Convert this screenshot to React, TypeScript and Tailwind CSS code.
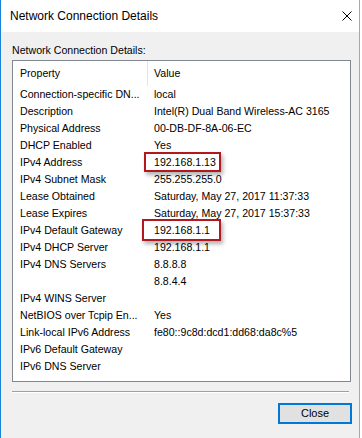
const rows: [string, string][] = [
  ['Connection-specific DN...', 'local'],
  ['Description', 'Intel(R) Dual Band Wireless-AC 3165'],
  ['Physical Address', '00-DB-DF-8A-06-EC'],
  ['DHCP Enabled', 'Yes'],
  ['IPv4 Address', '192.168.1.13'],
  ['IPv4 Subnet Mask', '255.255.255.0'],
  ['Lease Obtained', 'Saturday, May 27, 2017 11:37:33'],
  ['Lease Expires', 'Saturday, May 27, 2017 15:37:33'],
  ['IPv4 Default Gateway', '192.168.1.1'],
  ['IPv4 DHCP Server', '192.168.1.1'],
  ['IPv4 DNS Servers', '8.8.8.8'],
  ['', '8.8.4.4'],
  ['IPv4 WINS Server', ''],
  ['NetBIOS over Tcpip En...', 'Yes'],
  ['Link-local IPv6 Address', 'fe80::9c8d:dcd1:dd68:da8c%5'],
  ['IPv6 Default Gateway', ''],
  ['IPv6 DNS Server', ''],
]

export default function App() {
  return (
    <div className="relative h-[438px] w-[362px] bg-white font-['Liberation_Sans',Arial,sans-serif] text-black">
      <div className="flex h-full w-[360px] flex-col border-l border-r border-l-[#1883d7] border-r-[#a8a8a8]">
        {/* title bar */}
        <div className="flex h-[32px] items-center justify-between bg-white pl-[9px] pr-[7px]">
          <span className="text-[12px]">Network Connection Details</span>
          <svg width="10" height="10" viewBox="0 0 10 10" className="text-black">
            <path d="M0.5 0.5 L9.5 9.5 M9.5 0.5 L0.5 9.5" stroke="currentColor" strokeWidth="1" fill="none" />
          </svg>
        </div>

        <div className="flex flex-1 flex-col bg-[#f0f0f0] pl-[11px] pr-[8px] pt-[10px] text-[10.6px]">
          <div className="mb-px leading-[17px]">Network Connection Details:</div>

          <div className="h-[322px] border border-[#828790] bg-white">
            <div className="grid h-[25px] grid-cols-[135px_1fr] items-center">
              <div className="flex h-full items-center border-r border-[#e5e5e5] pl-[7px]">Property</div>
              <div className="pl-[6px]">Value</div>
            </div>
            {rows.map(([k, v], i) => (
              <div key={i} className="grid h-[17px] grid-cols-[135px_1fr] items-center leading-[17px]">
                <div className="whitespace-nowrap pl-[7px]">{k}</div>
                <div className="whitespace-nowrap pl-[6px]">{v}</div>
              </div>
            ))}
          </div>

          <div className="mt-[9px] w-[337px] border-t border-b border-t-[#a0a0a0] border-b-white" />

          <div className="mr-[-1px] mt-[10px] flex justify-end">
            <button className="h-[21px] w-[74px] border-2 border-[#0078d7] bg-[#e1e1e1] text-[11px] leading-none">
              Close
            </button>
          </div>
        </div>
      </div>

      {/* red annotation boxes */}
      <div className="absolute left-[144px] top-[152px] h-[20px] w-[77px] border-2 border-[#b3171f] shadow-[2px_3px_4px_rgba(0,0,0,0.3)]" />
      <div className="absolute left-[142px] top-[219px] h-[22px] w-[79px] border-2 border-[#b3171f] shadow-[2px_3px_4px_rgba(0,0,0,0.3)]" />
    </div>
  )
}
